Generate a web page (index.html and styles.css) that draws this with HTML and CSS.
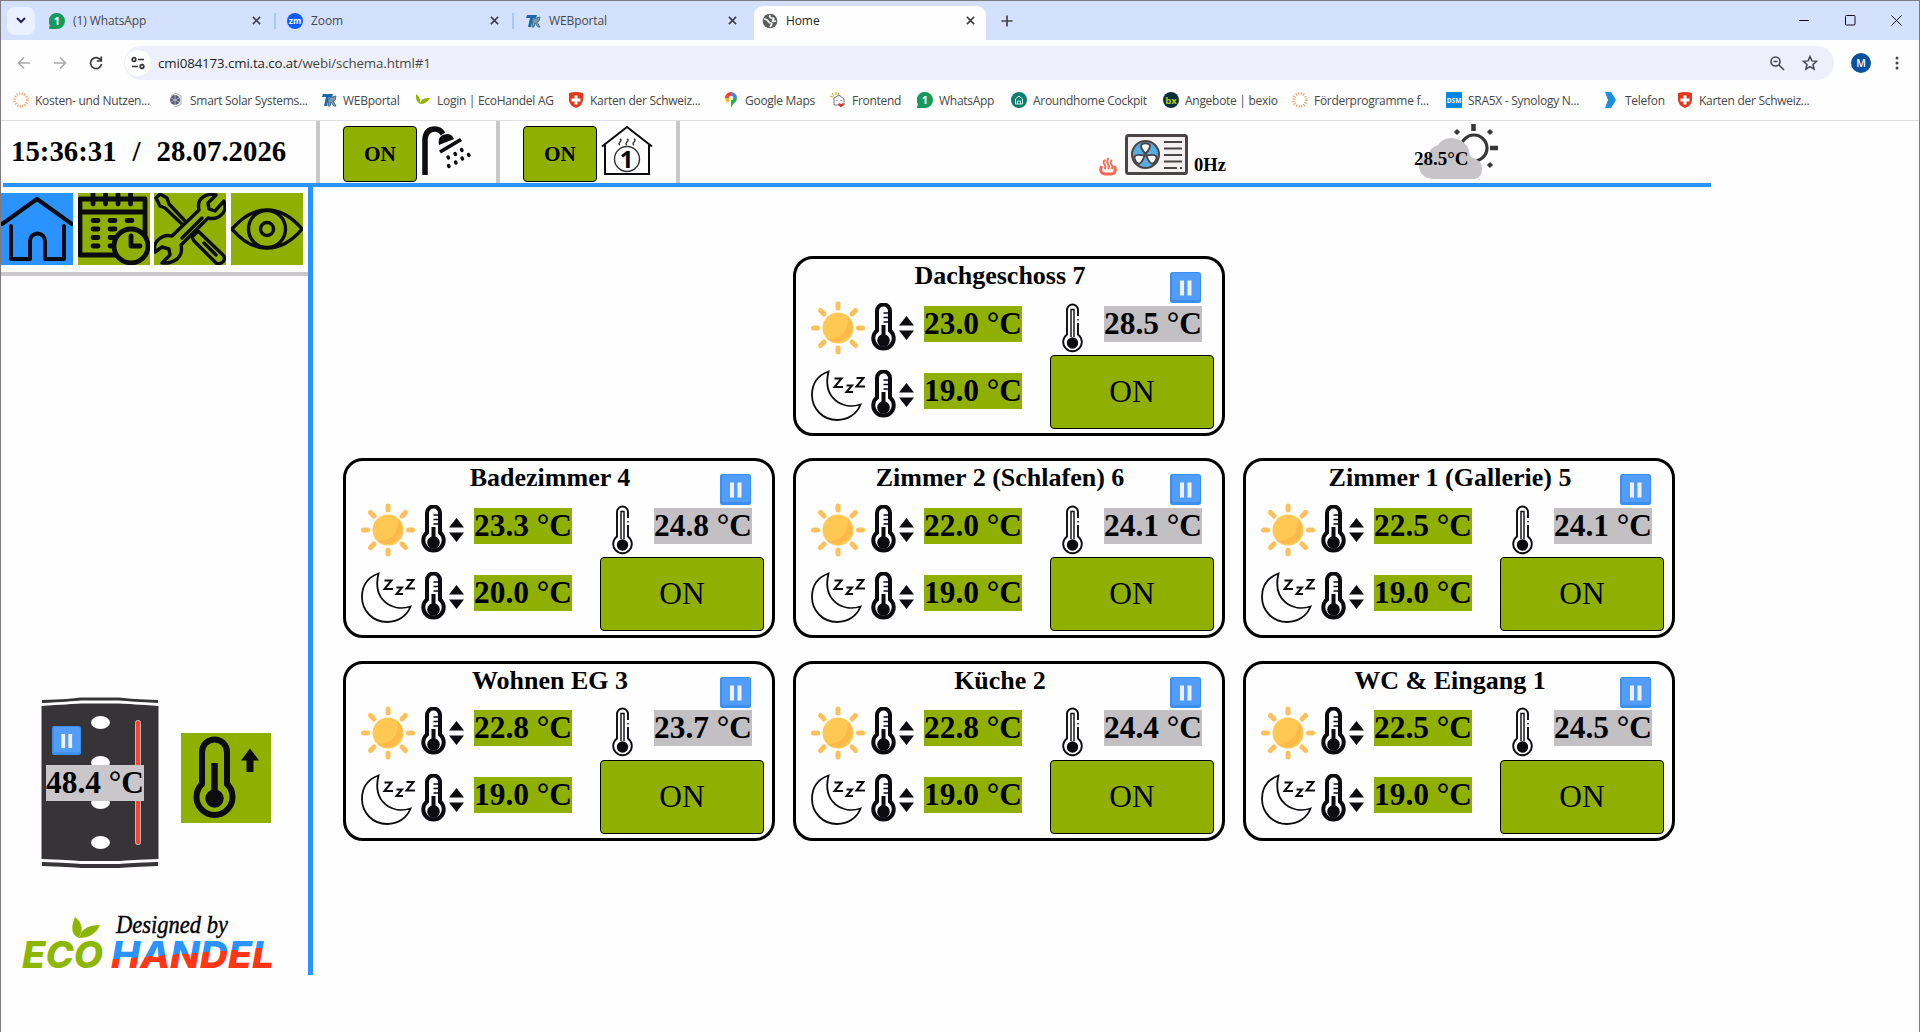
FILE: index.html
```html
<!DOCTYPE html>
<html lang="de">
<head>
    <meta charset="UTF-8">
    <title>Home</title>
    <link rel="stylesheet" href="styles.css">
</head>
<body>
    <!-- Symbole -->
    <svg class="symbols" width="0" height="0">
        <symbol id="close" viewBox="0 0 10 10"><path d="M1 1l8 8M9 1l-8 8" stroke="currentColor" stroke-width="1.7" fill="none"/></symbol>
        <symbol id="wa" viewBox="0 0 16 16"><path d="M8 0a8 8 0 1 1 0 16H0l.8-4A8 8 0 0 1 8 0z" fill="#159a5c"/><text x="8" y="12" font-size="11" font-weight="bold" fill="#fff" text-anchor="middle">1</text></symbol>
        <symbol id="ta" viewBox="0 0 16 16"><path d="M2 2h10l-1 3H8L6 14H3l2-9H1z" fill="#1c68ae"/><path d="M8 6l7-2-1 4-2 1 3 5h-2l-3-4-1 4H7z" fill="#7d99ad" stroke="#45708f"/></symbol>
        <symbol id="ring" viewBox="0 0 16 16"><circle cx="8" cy="8" r="6.4" fill="none" stroke="#f5a25d" stroke-width="2.6" stroke-dasharray="1.1 1.41"/></symbol>
        <symbol id="swiss" viewBox="0 0 16 16"><path d="M1 1q7-2 14 0v7q0 5-7 8-7-3-7-8z" fill="#e2381c"/><path d="M6.5 3.5h3v3h3v3h-3v3h-3v-3h-3v-3h3z" fill="#fff"/></symbol>
        <symbol id="sun" viewBox="0 0 54 54">
            <circle cx="27" cy="27" r="15.5" fill="#ffc852"/><path d="M37 15.5A15.5 15.5 0 0 1 16 38q22 0 21-22.500z" fill="#fbb94a"/>
            <path d="M27 3v4M27 47v4M2.500 27h4M47.500 27h4M9.500 9.500l3.500 3.500M41 41l3.500 3.500M9.500 44.500l3.500-3.500M41 13l3.500-3.500" stroke="#fdc05a" stroke-width="5" stroke-linecap="round"/>
        </symbol>
        <symbol id="moon" viewBox="0 0 54 51">
            <path d="M17.500 1.500C5 6 1 15 1 25c0 14 11 25 25 25 11 0 20-6 23.500-15.500C32 40 11 29 17.500 1.500z" fill="#fff" stroke="#0b0b10" stroke-width="1.800"/>
            <path d="M23.500 8.500h7l-7 8.500h8.500M35.500 15.500h5.500l-5.500 6.500h6.500M45.500 8h7l-7 8.500h8.500" fill="none" stroke="#0b0b10" stroke-width="2"/>
        </symbol>
        <symbol id="thermo" viewBox="0 0 25 51">
            <path d="M6 8a6.500 6.500 0 0 1 13 0v19.500a10.200 10.200 0 1 1-13 0z" fill="#fff" stroke="#0b0b10" stroke-width="4"/>
            <path d="M12.500 22v15" stroke="#0b0b10" stroke-width="4"/><circle cx="12.500" cy="37.500" r="6.300" fill="#0b0b10"/>
            <path d="M12.500 10h5M12.500 14.500h5M12.500 19h5" stroke="#0b0b10" stroke-width="1.500"/>
        </symbol>
        <symbol id="updown" viewBox="0 0 15 24"><path d="M7.500 0L15 9.500H0zM7.500 24L0 14.500h15z" fill="#0b0b10"/></symbol>
        <symbol id="thermo-thin" viewBox="0 0 21 51">
            <path d="M16 13V7a5.500 5.500 0 0 0-11 0v24.500a9.300 9.300 0 1 0 11 0V20" fill="none" stroke="#0b0b10" stroke-width="1.900"/>
            <path d="M9 34V6.500h3V34M16 16v1.500" fill="none" stroke="#0b0b10" stroke-width="1.400"/><circle cx="10.500" cy="40" r="5.700" fill="#0b0b10"/>
        </symbol>
        <symbol id="pause" viewBox="0 0 31 31">
            <rect width="31" height="31" rx="2.500" fill="#3c8fee"/><rect x="2" y="1" width="28" height="27" rx="2" fill="#519df8"/>
            <path d="M10 8.500h4v15h-4zM17.500 8.500h4v15h-4z" fill="#f1effc"/>
        </symbol>
    </svg>

    <div class="window">
        <!-- Tableiste -->
        <div class="tabs">
            <div class="tab-menu"><svg width="10" height="7" viewBox="0 0 10 7"><path d="M1 1l4 4 4-4" fill="none" stroke="#1c2350" stroke-width="2"/></svg></div>
            <div class="tab"><svg class="fav"><use href="#wa"/></svg><span>(1) WhatsApp</span><svg class="x"><use href="#close"/></svg></div>
            <div class="tab"><svg class="fav" viewBox="0 0 16 16"><circle cx="8" cy="8" r="8" fill="#0b5cff"/><text x="8" y="11" font-size="8.500" font-weight="bold" fill="#fff" text-anchor="middle">zm</text></svg><span>Zoom</span><svg class="x"><use href="#close"/></svg></div>
            <div class="tab last"><svg class="fav"><use href="#ta"/></svg><span>WEBportal</span><svg class="x"><use href="#close"/></svg></div>
            <div class="tab active"><svg class="fav" viewBox="0 0 16 16"><circle cx="8" cy="8" r="7.300" fill="#5a5d60"/><path d="M2 6q3 0 4 2t3 2-1 4M8 2q-1 3 2 3t1 2 3 1" fill="none" stroke="#fff" stroke-width="1.700"/></svg><span>Home</span><svg class="x"><use href="#close"/></svg></div>
            <svg class="plus" width="12" height="12" viewBox="0 0 12 12"><path d="M6 .5v11M.5 6h11" stroke="#444" stroke-width="1.700"/></svg>
            <div class="win-buttons">
                <svg width="11" height="11" viewBox="0 0 11 11"><path d="M0 5.500h10" stroke="#111"/></svg>
                <svg width="11" height="11" viewBox="0 0 11 11"><rect x=".5" y=".5" width="9.500" height="9.500" rx="1" fill="none" stroke="#111"/></svg>
                <svg width="11" height="11" viewBox="0 0 11 11"><path d="M.5 .5l10 10M10.500 .5l-10 10" stroke="#111"/></svg>
            </div>
        </div>

        <!-- Adresszeile -->
        <div class="toolbar">
            <svg width="14" height="14" viewBox="0 0 14 14"><path d="M13 7H2M7 1.500L1.500 7 7 12.500" fill="none" stroke="#a9a9ad" stroke-width="1.600"/></svg>
            <svg width="14" height="14" viewBox="0 0 14 14"><path d="M1 7h11M7 1.500L12.500 7 7 12.500" fill="none" stroke="#a9a9ad" stroke-width="1.600"/></svg>
            <svg width="14" height="14" viewBox="0 0 14 14"><path d="M11.800 4.200A5.500 5.500 0 1 0 12.500 8M12.300 .5v4.500H7.800" fill="none" stroke="#3c3c40" stroke-width="1.700"/></svg>
            <div class="omnibox">
                <div class="site-info"><svg width="14" height="14" viewBox="0 0 14 14"><g fill="none" stroke="#333" stroke-width="1.700"><circle cx="3" cy="3.500" r="1.800"/><path d="M7 3.500h6M1 10.500h6"/><circle cx="11" cy="10.500" r="1.800"/></g></svg></div>
                <span class="url"><b>cmi084173.cmi.ta.co.at</b>/webi/schema.html#1</span>
                <svg class="lens" width="15" height="15" viewBox="0 0 15 15"><path d="M9 9l5 5M3.500 5.500h4" stroke="#444750" stroke-width="1.600"/><circle cx="5.500" cy="5.500" r="4.500" fill="none" stroke="#444750" stroke-width="1.600"/></svg>
                <svg width="16" height="16" viewBox="0 0 16 16"><path d="M8 1.500l1.900 4.400 4.700.4-3.600 3.100 1.100 4.700L8 11.600l-4.100 2.500L5 9.400 1.400 6.300l4.700-.4z" fill="none" stroke="#444750" stroke-width="1.500"/></svg>
            </div>
            <div class="avatar">M</div>
            <svg width="4" height="14" viewBox="0 0 4 14"><g fill="#444"><circle cx="2" cy="2" r="1.500"/><circle cx="2" cy="7" r="1.500"/><circle cx="2" cy="12" r="1.500"/></g></svg>
        </div>

        <!-- Lesezeichen -->
        <div class="bookmarks">
            <div><svg class="fav"><use href="#ring"/></svg><span>Kosten- und Nutzen...</span></div>
            <div><svg class="fav" viewBox="0 0 16 16"><path d="M3 4l5-3 5 3v8l-5 3-2-1" fill="none" stroke="#aaa"/><circle cx="7" cy="8" r="5" fill="#565a70"/><path d="M7 3v10M3 6l8 4M3 10l8-4" stroke="#c3c5d5" stroke-width=".8"/></svg><span>Smart Solar Systems...</span></div>
            <div><svg class="fav"><use href="#ta"/></svg><span>WEBportal</span></div>
            <div><svg class="fav" viewBox="0 0 16 16"><path d="M1 2q5 3 4 10Q0 9 1 2zM5 12q1-7 10-6-3 6-10 6z" fill="#8db600"/></svg><span>Login | EcoHandel AG</span></div>
            <div><svg class="fav"><use href="#swiss"/></svg><span>Karten der Schweiz...</span></div>
            <div><svg class="fav" viewBox="0 0 16 16"><path d="M2 6a6 6 0 0 1 6-6v6z" fill="#e94335"/><path d="M8 0a6 6 0 0 1 6 6H8z" fill="#4285f4"/><path d="M14 6q0 3-3 5.500T8 16V6z" fill="#34a853"/><path d="M2 6q0 3 3 5l3-5z" fill="#fbbc04"/><circle cx="8" cy="6" r="2.300" fill="#fff"/></svg><span>Google Maps</span></div>
            <div><svg class="fav" viewBox="0 0 16 16"><path d="M0 4l3 1M2 1l2 3M6 0v3M9 1L8 3" stroke="#e2ae35" stroke-width="1.200"/><path d="M4 6l5-3 5 4v6H4z" fill="#fff" stroke="#777"/><path d="M7 8v1M11 8v1" stroke="#555"/><path d="M11 15.500l-3-3q1-2 3-.5 2-1.500 3 .5z" fill="#e32f2f"/></svg><span>Frontend</span></div>
            <div><svg class="fav"><use href="#wa"/></svg><span>WhatsApp</span></div>
            <div><svg class="fav" viewBox="0 0 16 16"><circle cx="8" cy="8" r="8" fill="#0d7e6c"/><path d="M4.500 12V7L8 4l3.500 3v5zM6.500 12V9h3v3" fill="none" stroke="#d3efe9"/></svg><span>Aroundhome Cockpit</span></div>
            <div><svg class="fav" viewBox="0 0 16 16"><circle cx="8" cy="8" r="8" fill="#0d2f3b"/><text x="8" y="11.500" font-size="9.500" font-weight="bold" fill="#b5cc18" text-anchor="middle">bx</text></svg><span>Angebote | bexio</span></div>
            <div><svg class="fav"><use href="#ring"/></svg><span>Förderprogramme f...</span></div>
            <div><svg class="fav" viewBox="0 0 16 16"><rect width="16" height="16" rx="1" fill="#0086e5"/><text x="8" y="10.500" font-size="6.500" font-weight="bold" fill="#fff" text-anchor="middle">DSM</text></svg><span>SRA5X - Synology N...</span></div>
            <div><svg class="fav" viewBox="0 0 16 16"><path d="M2 0h6l5 8-5 8H2l3-8z" fill="#188fdd"/></svg><span>Telefon</span></div>
            <div><svg class="fav"><use href="#swiss"/></svg><span>Karten der Schweiz...</span></div>
        </div>

        <!-- Kopfzeile der Visualisierung -->
        <div class="header">
            <div class="clock"><span>15:36:31</span><span>/</span><span>28.07.2026</span></div>
            <div class="switch">
                <button class="small-on">ON</button>
                <svg width="52" height="50" viewBox="0 0 52 50">
                    <path d="M3 49V13Q4 3 13 3q5 0 8 5" fill="none" stroke="#0b0b10" stroke-width="5.500"/>
                    <path d="M17 19q-2-10 8-11 5 0 7 5zM17 24.500L38 12l2 3-21 12.500z" fill="#0b0b10"/>
                    <path d="M26 31l.5 1M33 27.500l.5 1M39.500 23.500l.5 1M46.500 28.500l.5 1M26.500 39.500l.5 1M33.500 36l.5 1M40 32l.5 1" stroke="#0b0b10" stroke-width="3.500" stroke-linecap="round"/>
                </svg>
            </div>
            <div class="switch">
                <button class="small-on">ON</button>
                <svg class="house" width="52" height="50" viewBox="0 0 52 50">
                    <path d="M1 20.500L26 1l25 19.500M4 19v29h44V19" fill="none" stroke="#0b0b10" stroke-width="2"/>
                    <circle cx="26" cy="33" r="12.500" fill="none" stroke="#333" stroke-width="1.400"/>
                    <text x="25.500" y="41.500" font-size="24" font-weight="bold" text-anchor="middle">1</text>
                    <path d="M19 13q2 1 0 3t0 3M26 13q2 1 0 3t0 3M33 13q2 1 0 3t0 3" fill="none" stroke="#333" stroke-width="1.400"/>
                </svg>
            </div>
            <div class="heatpump">
                <svg class="steam" width="18" height="19" viewBox="0 0 18 19"><g fill="none" stroke="#ff6450"><path d="M2.500 9Q0 16.500 6 17h6q6-.5 3.500-8" stroke-width="3"/><path d="M5.500 12q2-2 0-4.500T6 3M9 12q2-2 0-5t.5-6M12.500 12q2-2 0-4.500T13 3" stroke-width="1.800"/></g></svg>
                <svg width="63" height="41" viewBox="0 0 63 41">
                    <rect x="1.500" y="1.500" width="60" height="38" rx="2" fill="#f5f0f1" stroke="#4b4545" stroke-width="3"/>
                    <circle cx="20.500" cy="20.500" r="13.500" fill="#56ade0" stroke="#4b4545" stroke-width="2"/>
                    <g id="blade"><path d="M20.500 20q-6-7-4-9.500 4-2.500 8 0 2 2.500-4 9.500z" fill="#fff" stroke="#4b4545" stroke-width="2"/></g>
                    <use href="#blade" transform="rotate(120 20.500 21)"/><use href="#blade" transform="rotate(240 20.500 21)"/>
                    <path d="M39 8h18M39 14.500h18M39 21h18M39 27.500h18M39 34h13M55 34h2" stroke="#4b4545" stroke-width="2.200"/>
                </svg>
                <span>0Hz</span>
            </div>
            <div class="weather">
                <svg width="84" height="58" viewBox="0 0 84 58">
                    <circle cx="59" cy="26" r="13" fill="#fff" stroke="#37373a" stroke-width="3.200"/>
                    <path d="M58.500 2v7M75 26h8M40.500 8.500l3 3M76.500 8.500l-3 3M73.500 41.500l3 3" stroke="#37373a" stroke-width="4.500"/>
                    <path d="M17 57Q4 55 4 43q1-8 10-10 0-7 9-10 4-7 14-7 16 2 18 17l1 2q11 3 11 12 0 8-7 10z" fill="#c7c4c7"/>
                </svg>
                <span>28.5°C</span>
            </div>
        </div>

        <div class="main">
            <div class="sidebar">
                <div class="nav">
                    <svg class="home" viewBox="0 0 72 72"><path d="M1 31L36 6l35 25M10 33v33h19V48a7.500 7.500 0 0 1 15 0v18h19V33"/></svg>
                    <svg class="calendar" viewBox="0 0 72 72"><path d="M2 6h65v56H2zM2 19h65"/><path d="M15 1v10M27.500 1v10M40 1v10M52.500 1v10"/><path d="M15 27.500h5M32 27.500h5M49 27.500h5M15 36h5M32 36h5M15 44.500h5M32 44.500h5M15 53h5M32 53h5"/><circle cx="53" cy="53" r="17" fill="#8fb000"/><path d="M53 43v10h9"/></svg>
                    <svg class="tools" viewBox="0 0 72 72"><path d="M2 5l4-4 7 4 2 6 18 19-3 3-19-18-5-2zM38 44l6-6 26 25q2 7-7 8L40 48zM50 50l12 12"/><path d="M70 8q3 9-3 14-5 5-13 3L27 52q2 9-4 14-7 5-15 4l8-8-1-6-7-2-7 5q-2-8 4-13 6-5 13-3L45 17q-2-9 4-13 6-4 13-2l-8 8 1 6 6 2z"/><path d="M28 45l20-20"/></svg>
                    <svg class="eye" viewBox="0 0 72 72"><path d="M1 36Q17 17 36 17t35 19Q55 55 36 55T1 36z"/><circle cx="36" cy="36" r="18.500"/><circle cx="36" cy="36" r="6.500"/></svg>
                </div>
                <div class="plant">
                    <div class="tank">
                        <svg width="118" height="172" viewBox="0 0 118 172">
                            <path d="M1 6V3Q30 2 40 .5h38Q90 2 117 3v3Q90 4.500 78 3.500H40Q30 4.500 1 6zM1 165v4q28 1 39 2h38q12-1 39-2v-4q-29 1-39 2H40q-10-1-39-2z" fill="#373437"/>
                            <path d="M.5 9Q30 7 40 6.500h38Q90 7 117.500 9v153q-28 1-39 2h-39q-11-1-39-2z" fill="#373437"/>
                            <g fill="#fff"><ellipse cx="59.500" cy="25.500" rx="9.500" ry="6.500"/><ellipse cx="59.500" cy="65.500" rx="9.500" ry="6.500"/><ellipse cx="59.500" cy="105.500" rx="9.500" ry="6.500"/><ellipse cx="59.500" cy="145.500" rx="9.500" ry="6.500"/></g>
                            <rect x="94.500" y="23.500" width="5" height="124" rx="2" fill="#ff4232" stroke="#c9b8b8"/>
                        </svg>
                        <svg class="tank-pause"><use href="#pause"/></svg>
                        <span class="value actual tank-value">48.4 °C</span>
                    </div>
                    <svg class="boost" width="90" height="90" viewBox="0 0 90 90">
                        <path d="M21 19a12.500 12.500 0 0 1 25 0v32a18 18 0 1 1-25 0z" fill="none" stroke="#0b0b10" stroke-width="6"/>
                        <path d="M33.500 30v35" stroke="#0b0b10" stroke-width="6.500"/><circle cx="33.500" cy="65.500" r="9.200" fill="#0b0b10"/>
                        <path d="M69 15.500l9 12h-5.500V39h-7V27.500H60z" fill="#0b0b10"/>
                    </svg>
                </div>
                <svg class="logo" width="260" height="70" viewBox="-4 0 260 70">
                    <defs><linearGradient id="handel" gradientUnits="userSpaceOnUse" x1="180" y1="37" x2="181.500" y2="57"><stop offset=".42" stop-color="#2b93ff"/><stop offset=".42" stop-color="#ff3516"/></linearGradient></defs>
                    <path d="M53 10q-7 17 4 21 7-12-4-21zM57 31q3-13 21-13-6 13-21 13z" fill="#8db600"/>
                    <text class="designed" x="94" y="26" textLength="112" lengthAdjust="spacingAndGlyphs">Designed by</text>
                    <text class="brand" x="0" y="61" textLength="81" lengthAdjust="spacingAndGlyphs" fill="#8db600">ECO</text>
                    <text class="brand" x="89" y="61" textLength="163" lengthAdjust="spacingAndGlyphs" fill="url(#handel)">HANDEL</text>
                </svg>
            </div>

            <!-- Räume -->
            <div class="rooms">
                <div class="card top">
                    <h2>Dachgeschoss 7</h2>
                    <svg class="pause"><use href="#pause"/></svg>
                    <div class="setpoints">
                        <div class="row"><svg class="sun"><use href="#sun"/></svg><svg class="thermo"><use href="#thermo"/></svg><svg class="updown"><use href="#updown"/></svg><span class="value">23.0 °C</span></div>
                        <div class="row"><svg class="moon"><use href="#moon"/></svg><svg class="thermo"><use href="#thermo"/></svg><svg class="updown"><use href="#updown"/></svg><span class="value">19.0 °C</span></div>
                    </div>
                    <div class="state">
                        <div class="row"><svg class="thin"><use href="#thermo-thin"/></svg><span class="value actual">28.5 °C</span></div>
                        <button class="on">ON</button>
                    </div>
                </div>
                <div class="card">
                    <h2>Badezimmer 4</h2>
                    <svg class="pause"><use href="#pause"/></svg>
                    <div class="setpoints">
                        <div class="row"><svg class="sun"><use href="#sun"/></svg><svg class="thermo"><use href="#thermo"/></svg><svg class="updown"><use href="#updown"/></svg><span class="value">23.3 °C</span></div>
                        <div class="row"><svg class="moon"><use href="#moon"/></svg><svg class="thermo"><use href="#thermo"/></svg><svg class="updown"><use href="#updown"/></svg><span class="value">20.0 °C</span></div>
                    </div>
                    <div class="state">
                        <div class="row"><svg class="thin"><use href="#thermo-thin"/></svg><span class="value actual">24.8 °C</span></div>
                        <button class="on">ON</button>
                    </div>
                </div>
                <div class="card">
                    <h2>Zimmer 2 (Schlafen) 6</h2>
                    <svg class="pause"><use href="#pause"/></svg>
                    <div class="setpoints">
                        <div class="row"><svg class="sun"><use href="#sun"/></svg><svg class="thermo"><use href="#thermo"/></svg><svg class="updown"><use href="#updown"/></svg><span class="value">22.0 °C</span></div>
                        <div class="row"><svg class="moon"><use href="#moon"/></svg><svg class="thermo"><use href="#thermo"/></svg><svg class="updown"><use href="#updown"/></svg><span class="value">19.0 °C</span></div>
                    </div>
                    <div class="state">
                        <div class="row"><svg class="thin"><use href="#thermo-thin"/></svg><span class="value actual">24.1 °C</span></div>
                        <button class="on">ON</button>
                    </div>
                </div>
                <div class="card">
                    <h2>Zimmer 1 (Gallerie) 5</h2>
                    <svg class="pause"><use href="#pause"/></svg>
                    <div class="setpoints">
                        <div class="row"><svg class="sun"><use href="#sun"/></svg><svg class="thermo"><use href="#thermo"/></svg><svg class="updown"><use href="#updown"/></svg><span class="value">22.5 °C</span></div>
                        <div class="row"><svg class="moon"><use href="#moon"/></svg><svg class="thermo"><use href="#thermo"/></svg><svg class="updown"><use href="#updown"/></svg><span class="value">19.0 °C</span></div>
                    </div>
                    <div class="state">
                        <div class="row"><svg class="thin"><use href="#thermo-thin"/></svg><span class="value actual">24.1 °C</span></div>
                        <button class="on">ON</button>
                    </div>
                </div>
                <div class="card">
                    <h2>Wohnen EG 3</h2>
                    <svg class="pause"><use href="#pause"/></svg>
                    <div class="setpoints">
                        <div class="row"><svg class="sun"><use href="#sun"/></svg><svg class="thermo"><use href="#thermo"/></svg><svg class="updown"><use href="#updown"/></svg><span class="value">22.8 °C</span></div>
                        <div class="row"><svg class="moon"><use href="#moon"/></svg><svg class="thermo"><use href="#thermo"/></svg><svg class="updown"><use href="#updown"/></svg><span class="value">19.0 °C</span></div>
                    </div>
                    <div class="state">
                        <div class="row"><svg class="thin"><use href="#thermo-thin"/></svg><span class="value actual">23.7 °C</span></div>
                        <button class="on">ON</button>
                    </div>
                </div>
                <div class="card">
                    <h2>Küche 2</h2>
                    <svg class="pause"><use href="#pause"/></svg>
                    <div class="setpoints">
                        <div class="row"><svg class="sun"><use href="#sun"/></svg><svg class="thermo"><use href="#thermo"/></svg><svg class="updown"><use href="#updown"/></svg><span class="value">22.8 °C</span></div>
                        <div class="row"><svg class="moon"><use href="#moon"/></svg><svg class="thermo"><use href="#thermo"/></svg><svg class="updown"><use href="#updown"/></svg><span class="value">19.0 °C</span></div>
                    </div>
                    <div class="state">
                        <div class="row"><svg class="thin"><use href="#thermo-thin"/></svg><span class="value actual">24.4 °C</span></div>
                        <button class="on">ON</button>
                    </div>
                </div>
                <div class="card">
                    <h2>WC &amp; Eingang 1</h2>
                    <svg class="pause"><use href="#pause"/></svg>
                    <div class="setpoints">
                        <div class="row"><svg class="sun"><use href="#sun"/></svg><svg class="thermo"><use href="#thermo"/></svg><svg class="updown"><use href="#updown"/></svg><span class="value">22.5 °C</span></div>
                        <div class="row"><svg class="moon"><use href="#moon"/></svg><svg class="thermo"><use href="#thermo"/></svg><svg class="updown"><use href="#updown"/></svg><span class="value">19.0 °C</span></div>
                    </div>
                    <div class="state">
                        <div class="row"><svg class="thin"><use href="#thermo-thin"/></svg><span class="value actual">24.5 °C</span></div>
                        <button class="on">ON</button>
                    </div>
                </div>
            </div>
        </div>
    </div>
</body>
</html>
```
FILE: styles.css
```css
* {
    margin: 0;
    padding: 0;
    box-sizing: border-box;
}

body {
    font-family: "Open Sans", sans-serif;
    font-size: 12px;
    background-color: #fefefe;
    color: #474747;
    overflow: hidden;
}

svg {
    display: block;
    flex: none;
}

.symbols {
    position: absolute;
}

.window {
    height: 1032px;
    border: 1px solid #7d7a80;
    border-bottom: none;
}

/* Tableiste */
.tabs {
    display: flex;
    align-items: center;
    height: 39px;
    padding-left: 6px;
    background-color: #d3e1ff;
}

.tab-menu {
    display: flex;
    align-items: center;
    justify-content: center;
    width: 28px;
    height: 28px;
    margin-right: 3px;
    border-radius: 8px;
    background-color: #e9f0ff;
}

.tab {
    display: flex;
    align-items: center;
    width: 238px;
    height: 16px;
    padding: 0 13px 0 11px;
    border-right: 2px solid #a9c7fb;
    letter-spacing: -0.1px;
}

.tab span {
    flex: 1;
    margin-left: 8px;
}

.fav {
    width: 16px;
    height: 16px;
    letter-spacing: 0;
}

.x {
    width: 9px;
    height: 9px;
    color: #3c3c40;
}

.tab.last {
    border-color: transparent;
}

.tab.active {
    align-self: flex-end;
    width: 232px;
    height: 34px;
    margin: 0 3px 0 2px;
    padding: 0 11px 5px 8px;
    border: none;
    border-radius: 9px 9px 0 0;
    background-color: #fefefe;
    color: #222;
}

.plus {
    margin-left: 12px;
}

.win-buttons {
    display: flex;
    gap: 35px;
    margin-left: auto;
    margin-right: 17px;
}

/* Adresszeile */
.toolbar {
    display: flex;
    align-items: center;
    gap: 22px;
    height: 46px;
    padding: 0 20px 0 16px;
    background-color: #fefefe;
}

.omnibox {
    display: flex;
    align-items: center;
    flex: 1;
    height: 34px;
    margin: 0 -5px 0 -1px;
    padding: 0 16px 0 1px;
    border-radius: 17px;
    background-color: #edf0fb;
    color: #474747;
}

.site-info {
    display: flex;
    align-items: center;
    justify-content: center;
    width: 26px;
    height: 26px;
    margin-right: 7px;
    border-radius: 50%;
    background-color: #fff;
}

.url {
    font-size: 13.3px;
    letter-spacing: -0.12px;
}

.url b {
    font-weight: normal;
    color: #1f1f1f;
}

.lens {
    margin-left: auto;
    margin-right: 17px;
}

.avatar {
    width: 20px;
    height: 20px;
    margin-right: 2px;
    border-radius: 50%;
    background-color: #0652a0;
    color: #fff;
    font-size: 10.5px;
    font-weight: 600;
    line-height: 20px;
    text-align: center;
}

/* Lesezeichen */
.bookmarks {
    display: grid;
    grid-template-columns: 155px 153px 94px 153px 155px 107px 87px 94px 152px 129px 154px 157px 74px auto;
    align-items: center;
    height: 35px;
    padding: 0 0 6px 12px;
    border-bottom: 1px solid #dfdfe1;
    background-color: #fefefe;
}

.bookmarks div {
    display: flex;
    align-items: center;
    gap: 6px;
    letter-spacing: -0.28px;
    white-space: nowrap;
}

/* Kopfzeile */
.header {
    display: flex;
    width: 1708px;
    height: 66px;
    margin-left: 2px;
    border-bottom: 4px solid #2b93ff;
    font-family: "Liberation Serif", serif;
    font-weight: bold;
    color: #000;
}

.clock {
    display: flex;
    align-items: center;
    gap: 16px;
    width: 317px;
    padding: 0 0 1px 8px;
    border-right: 4px solid #cac7ca;
    font-size: 28.8px;
}

.switch {
    display: flex;
    align-items: flex-start;
    gap: 5px;
    width: 180px;
    padding: 5px 0 0 23px;
    border-right: 4px solid #cac7ca;
}

.small-on,
.on {
    border: 1px solid #000;
    border-radius: 4px;
    background-color: #8fb000;
    font-family: "Liberation Serif", serif;
    color: #000;
}

.small-on {
    width: 74px;
    height: 56px;
    font-size: 21.3px;
    font-weight: bold;
}

.house {
    margin-left: -1px;
    font-family: "Open Sans", sans-serif;
}

.heatpump {
    display: flex;
    align-items: flex-end;
    width: 316px;
    margin-left: 419px;
    padding-bottom: 8px;
    font-size: 18.5px;
}

.steam {
    margin-right: 8px;
    margin-bottom: -1px;
}

.heatpump span {
    margin-left: 6px;
    line-height: 20px;
}

.weather {
    position: relative;
    padding-top: 1px;
}

.weather span {
    position: absolute;
    left: -1px;
    top: 27px;
    font-size: 19px;
}

/* Seitenleiste */
.main {
    display: flex;
}

.sidebar {
    display: flex;
    flex-direction: column;
    width: 312px;
    height: 788px;
    padding-top: 6px;
    border-right: 5px solid #2b93ff;
}

.nav {
    display: flex;
    gap: 4.5px;
    padding-bottom: 7px;
    border-bottom: 4px solid #cac7ca;
}

.nav svg {
    width: 72px;
    height: 72px;
    background-color: #8fb000;
    fill: none;
    stroke: #0b0b10;
    stroke-width: 4;
    stroke-linecap: round;
    stroke-linejoin: round;
}

.nav .home {
    background-color: #2b93ff;
}

.nav .calendar {
    stroke-width: 4.8;
}

.nav .tools,
.nav .eye {
    stroke-width: 3.4;
}

.nav .tools path {
    fill: #8fb000;
}

.plant {
    display: flex;
    gap: 22px;
    margin: 421px 0 0 40px;
}

.tank {
    position: relative;
}

.tank-pause {
    position: absolute;
    left: 11px;
    top: 29px;
    width: 29px;
    height: 29px;
}

.boost {
    margin-top: 36px;
    background-color: #8fb000;
}

.logo {
    margin: 38px 0 0 17px;
}

.designed {
    font-family: "Liberation Serif", serif;
    font-size: 25px;
    font-style: italic;
    fill: #000;
    stroke: #000;
    stroke-width: 0.4;
}

.brand {
    font-family: Inter, sans-serif;
    font-size: 37px;
    font-style: italic;
    font-weight: 800;
}

/* Räume */
.rooms {
    display: grid;
    grid-template-columns: repeat(3, 432px);
    grid-auto-rows: 180px;
    gap: 22.4px 18px;
    padding: 69px 0 0 30px;
    font-family: "Liberation Serif", serif;
    color: #000;
}

.card {
    position: relative;
    display: grid;
    grid-template-columns: 239px 164px;
    grid-template-rows: 42px auto;
    padding-left: 15px;
    border: 3px solid #000;
    border-radius: 20px;
}

.card.top {
    grid-column: 2;
}

/* die zweite Zeile beginnt wieder links */
.card.top + .card {
    grid-column: 1;
}

.card h2 {
    grid-column: 1 / 3;
    width: 378px;
    padding-top: 2px;
    font-size: 26px;
    line-height: 30px;
    text-align: center;
}

.pause {
    position: absolute;
    right: 21px;
    top: 13px;
    width: 31px;
    height: 31px;
}

.setpoints {
    display: flex;
    flex-direction: column;
    gap: 13px;
}

.row {
    display: flex;
    align-items: center;
    height: 54px;
}

.sun {
    width: 54px;
    height: 54px;
}

.moon {
    width: 54px;
    height: 51px;
}

.thermo {
    width: 25px;
    height: 51px;
    margin-left: 5.5px;
}

.updown {
    width: 15px;
    height: 24px;
    margin-left: 3px;
}

.value {
    width: 98px;
    height: 36px;
    margin: -9px 0 0 10.5px;
    background-color: #8fb000;
    font-family: "Liberation Serif", serif;
    font-size: 31.4px;
    font-weight: bold;
    line-height: 36px;
    color: #000;
    white-space: nowrap;
}

.value.actual {
    background-color: #c3c0c4;
}

.value.tank-value {
    position: absolute;
    left: 5px;
    top: 68px;
    margin: 0;
    background-color: #cac7ca;
}

.thin {
    width: 21px;
    height: 51px;
    margin-left: 11.5px;
}

.state .value {
    margin-left: 21.5px;
}

.on {
    width: 164px;
    height: 74px;
    font-size: 31.4px;
}
```
